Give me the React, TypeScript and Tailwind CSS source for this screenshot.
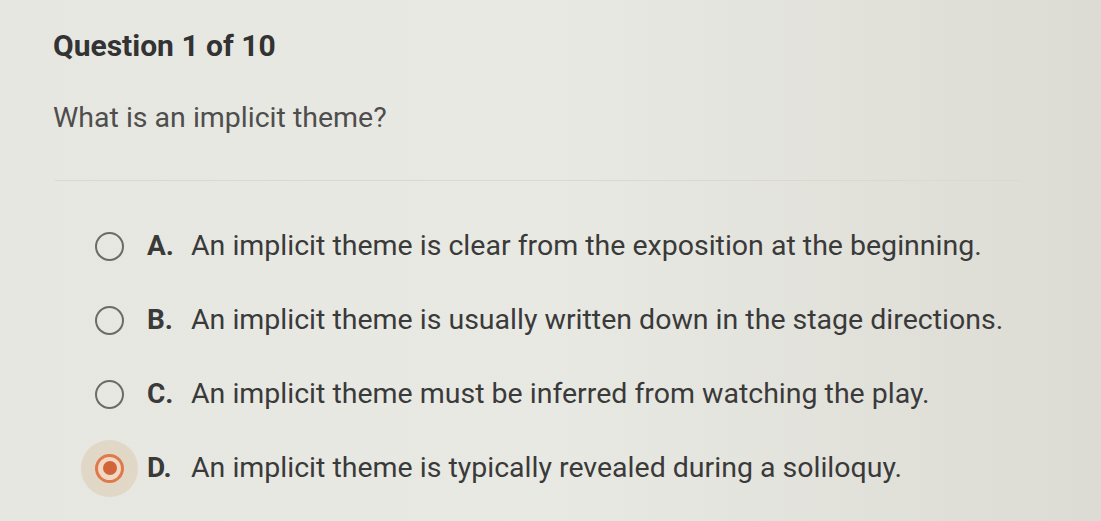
const options = [
  { letter: 'A.', text: 'An implicit theme is clear from the exposition at the beginning.' },
  { letter: 'B.', text: 'An implicit theme is usually written down in the stage directions.' },
  { letter: 'C.', text: 'An implicit theme must be inferred from watching the play.' },
  { letter: 'D.', text: 'An implicit theme is typically revealed during a soliloquy.' },
]

const selected = 3

function Radio({ checked }: { checked: boolean }) {
  if (!checked) {
    return <span className="block w-[29px] h-[29px] rounded-full border-[2.5px] border-[#6b6b68] shrink-0" />
  }
  return (
    <span className="relative flex items-center justify-center w-[29px] h-[29px] shrink-0">
      {/* focus halo */}
      <span className="absolute -inset-[14px] rounded-full bg-[#dccdb5]/60" />
      <span className="relative flex items-center justify-center w-[29px] h-[29px] rounded-full border-[3px] border-[#e0794a] bg-[#f0d8c2]">
        <span className="w-[14px] h-[14px] rounded-full bg-[#d2643a]" />
      </span>
    </span>
  )
}

export default function App() {
  return (
    <div
      className="w-[1101px] h-[521px] overflow-hidden bg-gradient-to-r from-[#e7e7e1] via-[#e9e9e3] to-[#dcdcd5] text-[#363636]"
      style={{ fontFamily: 'Roboto, "Liberation Sans", sans-serif' }}
    >
      <div className="pl-[53px] pt-[28px]">
        <h1 className="text-[30px] leading-[36px] font-bold text-[#333333]">Question 1 of 10</h1>
        <p className="mt-[38px] text-[28.5px] leading-[32px] text-[#4e4e4c]">What is an implicit theme?</p>
      </div>

      <div className="mt-[46px] ml-[55px] mr-[80px] h-px bg-[#d9d9d2]" />

      <div className="mt-[28px] pl-[95px] flex flex-col">
        {options.map((o, i) => (
          <div key={o.letter} className="h-[74px] flex items-center">
            <Radio checked={i === selected} />
            <span className="ml-[23px] w-[44px] text-[28px] font-bold text-[#3a3a3a]">{o.letter}</span>
            <span className="text-[28.5px] text-[#3a3a3a]">{o.text}</span>
          </div>
        ))}
      </div>
    </div>
  )
}
